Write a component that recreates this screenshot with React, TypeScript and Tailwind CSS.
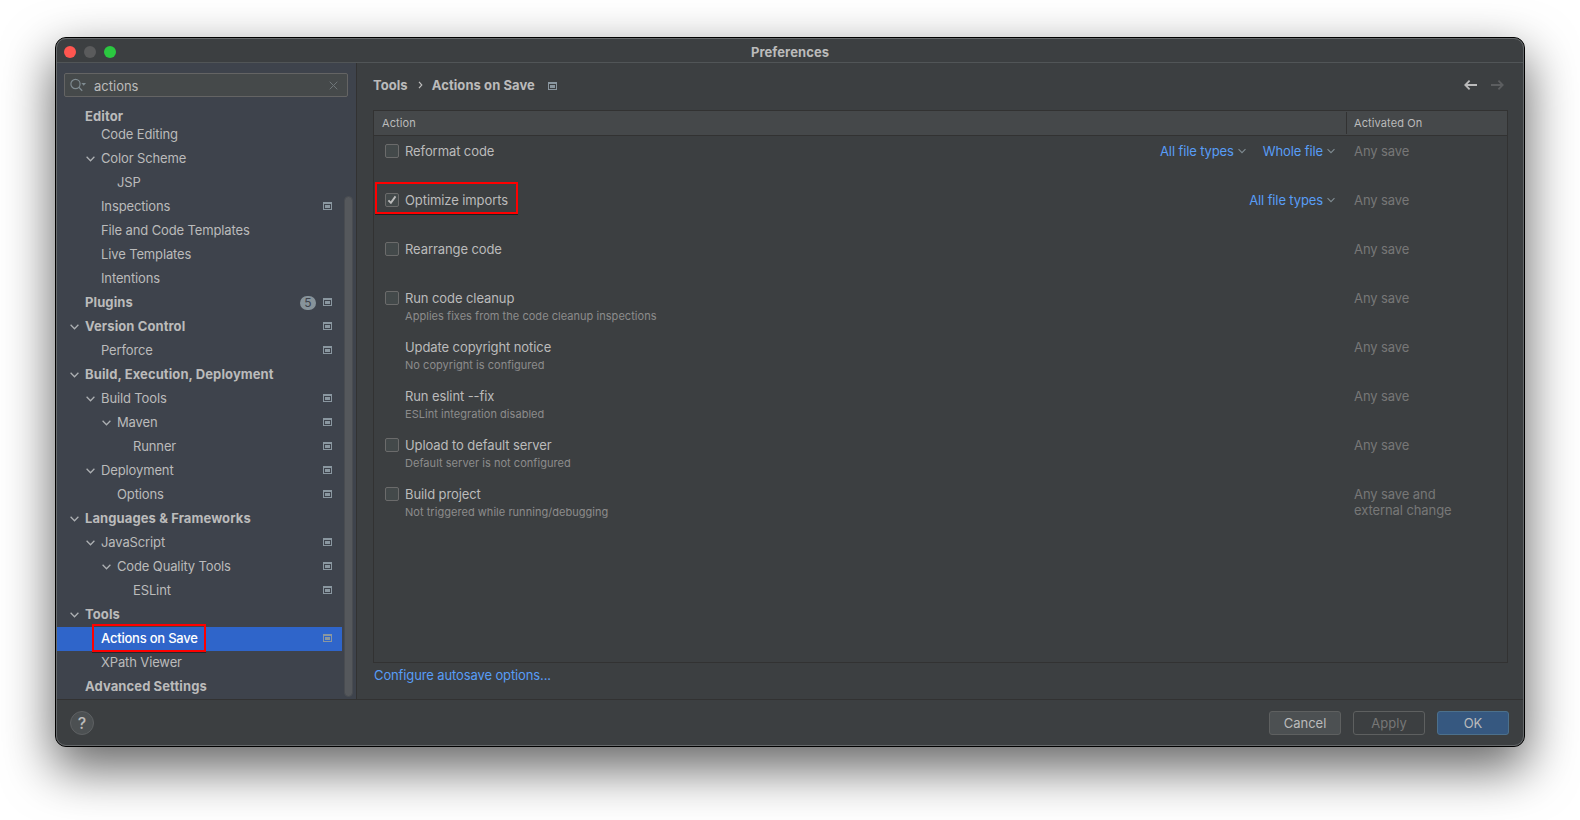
import React from "react";

type TreeItem = {
  label: string;
  level: number;
  bold?: boolean;
  open?: boolean;
  mark?: boolean;
  count?: number;
  selected?: boolean;
};

const tree: TreeItem[] = [
  { label: "Code Editing", level: 1 },
  { label: "Color Scheme", level: 1, open: true },
  { label: "JSP", level: 2 },
  { label: "Inspections", level: 1, mark: true },
  { label: "File and Code Templates", level: 1 },
  { label: "Live Templates", level: 1 },
  { label: "Intentions", level: 1 },
  { label: "Plugins", level: 0, bold: true, mark: true, count: 5 },
  { label: "Version Control", level: 0, bold: true, open: true, mark: true },
  { label: "Perforce", level: 1, mark: true },
  { label: "Build, Execution, Deployment", level: 0, bold: true, open: true },
  { label: "Build Tools", level: 1, open: true, mark: true },
  { label: "Maven", level: 2, open: true, mark: true },
  { label: "Runner", level: 3, mark: true },
  { label: "Deployment", level: 1, open: true, mark: true },
  { label: "Options", level: 2, mark: true },
  { label: "Languages & Frameworks", level: 0, bold: true, open: true },
  { label: "JavaScript", level: 1, open: true, mark: true },
  { label: "Code Quality Tools", level: 2, open: true, mark: true },
  { label: "ESLint", level: 3, mark: true },
  { label: "Tools", level: 0, bold: true, open: true },
  { label: "Actions on Save", level: 1, mark: true, selected: true },
  { label: "XPath Viewer", level: 1 },
  { label: "Advanced Settings", level: 0, bold: true },
];

const indents = ["pl-[11px]", "pl-[27px]", "pl-[43px]", "pl-[59px]"];

type Action = {
  label: string;
  note?: string;
  check?: "on" | "off";
  links?: string[];
  when?: string;
};

const actions: Action[] = [
  { label: "Reformat code", check: "off", links: ["All file types", "Whole file"] },
  { label: "Optimize imports", check: "on", links: ["All file types"] },
  { label: "Rearrange code", check: "off" },
  { label: "Run code cleanup", check: "off", note: "Applies fixes from the code cleanup inspections" },
  { label: "Update copyright notice", note: "No copyright is configured" },
  { label: "Run eslint --fix", note: "ESLint integration disabled" },
  { label: "Upload to default server", check: "off", note: "Default server is not configured" },
  { label: "Build project", check: "off", note: "Not triggered while running/debugging", when: "Any save and external change" },
];

function Chevron({ className }: { className: string }) {
  return (
    <svg width="9" height="6" viewBox="0 0 9 6" fill="none" stroke="currentColor" className={className}>
      <path d="M0.6 0.8 L4.5 4.8 L8.4 0.8" strokeWidth="1.25" />
    </svg>
  );
}

function ProjectMark({ className }: { className: string }) {
  return (
    <svg width="9" height="8" viewBox="0 0 9 8" fill="currentColor" className={className}>
      <path d="M0 0h9v8H0z M1 2v5h7V2z" fillRule="evenodd" />
      <path d="M2 3h5v3H2z" />
    </svg>
  );
}

function TreeRow({ item }: { item: TreeItem }) {
  const weight = item.bold ? "font-bold tracking-[0.1px]" : item.selected ? "font-medium tracking-[-0.22px]" : "tracking-[-0.13px]";
  return (
    <div
      className={`flex h-[24px] w-[285px] shrink-0 items-center ${indents[item.level]} ${
        item.selected ? "bg-[#2f65ca] text-white" : "text-[#bbbbbb]"
      }`}
    >
      <span className="flex w-[17px] shrink-0 items-center">
        {item.open && <Chevron className="-mt-px ml-[2px] text-[#adb0b3]" />}
      </span>
      <span className={`relative pb-[2px] whitespace-nowrap ${weight}`}>
        {item.label}
        {item.selected && (
          <span className="absolute -top-[6px] -left-[9px] h-[28px] w-[114px] border-2 border-[#ff0000] shadow-[0_1px_0_rgba(0,0,0,0.4)]" />
        )}
      </span>
      <span className="ml-auto flex items-center gap-[7px] pr-[10px]">
        {item.count !== undefined && (
          <span className="flex h-[14px] w-[16px] items-center justify-center rounded-full bg-[#87939a] text-[12px] text-[#3e434c]">
            {item.count}
          </span>
        )}
        {item.mark && <ProjectMark className="-mt-[2px] text-[#8a97a0]" />}
      </span>
    </div>
  );
}

function Checkbox({ on }: { on: boolean }) {
  return (
    <span className="flex size-[14px] items-center justify-center rounded-[2px] border border-[#6b6b6b] bg-[#43494a]">
      {on && (
        <svg width="12" height="12" viewBox="0 0 12 12" fill="none" stroke="#bbbbbb" className="shrink-0">
          <path d="M2.4 6.4 L4.9 8.9 L9.5 2.4" strokeWidth="1.9" />
        </svg>
      )}
    </span>
  );
}

function ActionRow({ action }: { action: Action }) {
  return (
    <div className="flex h-[49px] tracking-[-0.09px]">
      <div className="flex w-[973px] pl-[11px]">
        <div className="w-[20px] pt-[8px]">{action.check && <Checkbox on={action.check === "on"} />}</div>
        <div className="pt-[7px]">
          <div className="relative h-[16px] leading-[17px] whitespace-nowrap">
            {action.label}
            {action.check === "on" && (
              <span className="absolute -top-[10px] -left-[30px] h-[32px] w-[143px] border-2 border-[#ff0000] shadow-[0_1px_0_rgba(0,0,0,0.5)]" />
            )}
          </div>
          {action.note && (
            <div className="pt-[2px] text-[11px] leading-[16px] tracking-[0.04px] text-[#8c8c8c]">{action.note}</div>
          )}
        </div>
        <div className="ml-auto flex gap-[17px] pt-[7px] pr-[12px] leading-[17px] text-[#589df6]">
          {action.links?.map((l) => (
            <span key={l} className="flex h-[16px] items-center gap-[4px] tracking-[-0.12px]">
              {l}
              <Chevron className="w-[8px] text-[#7f8b91]" />
            </span>
          ))}
        </div>
      </div>
      <div className="w-[120px] pt-[7px] pl-[7px] leading-[16px] text-[#777777]">{action.when ?? "Any save"}</div>
    </div>
  );
}

export default function App() {
  return (
    <div className="h-[820px] w-[1580px] overflow-hidden bg-white pt-[37px] pl-[55px] font-['Inter',sans-serif] text-[13px] leading-[16px] text-[#bbbbbb]">
      <div className="h-[710px] w-[1470px] rounded-[11px] border border-black bg-[#3c3f41] shadow-[0_20px_50px_2px_rgba(0,0,0,0.6)]">
        <div className="flex h-[708px] w-[1468px] flex-col overflow-hidden rounded-[10px] border border-[#66696b]">
          <header className="relative flex h-[24px] shrink-0 items-center justify-center border-b border-[#515557]">
            <div className="absolute top-[7px] left-[7px] flex gap-[8px]">
              <span className="size-[12px] rounded-full bg-[#ff5650]" />
              <span className="size-[12px] rounded-full bg-[#5a5b5c]" />
              <span className="size-[12px] rounded-full bg-[#2bc840]" />
            </div>
            <h1 className="pt-[2px] font-bold tracking-[0.08px]">Preferences</h1>
          </header>

          <div className="flex h-[636px] shrink-0">
            <aside className="flex w-[300px] shrink-0 flex-col border-r border-[#323232] bg-[#3e434c]">
              <div className="mt-[10px] ml-[7px] flex h-[24px] w-[284px] shrink-0 items-center rounded-[2px] border border-[#646464] bg-[#45494a] pl-[5px]">
                <svg width="17" height="14" viewBox="0 0 17 14" fill="none" stroke="#7f8b91" className="shrink-0">
                  <circle cx="5.5" cy="6" r="4.6" strokeWidth="1.2" />
                  <path d="M8.8 9.3 L12.2 12.7" strokeWidth="1.3" />
                  <path d="M11.4 5 H16 L13.7 7.8z" fill="#7f8b91" stroke="none" />
                </svg>
                <span className="pt-px pl-[7px]">actions</span>
                <svg width="9" height="9" viewBox="0 0 9 9" stroke="#6f7679" className="mr-[9px] ml-auto">
                  <path d="M0.7 0.7 L8.3 8.3 M8.3 0.7 L0.7 8.3" strokeWidth="1" />
                </svg>
              </div>
              <div className="flex">
                <div className="flex w-[285px] shrink-0 flex-col pt-[8px]">
                  <div className="flex h-[18px] shrink-0 items-start pt-[3px] pl-[28px] font-bold tracking-[0.1px]">Editor</div>
                  {tree.map((t) => (
                    <TreeRow key={t.label} item={t} />
                  ))}
                </div>
                <div className="mt-[99px] ml-[2px] h-[501px] w-[9px] rounded-full border border-[#494c51] bg-[#55585c]" />
              </div>
            </aside>

            <main className="flex grow flex-col pl-[16px]">
              <div className="flex h-[47px] shrink-0 items-center pr-[19px] pb-[3px] font-bold">
                <span className="tracking-[0.05px]">Tools</span>
                <svg width="5" height="8" viewBox="0 0 5 8" fill="none" stroke="#bbbbbb" className="mr-[9px] ml-[10px]">
                  <path d="M1 0.8 L3.8 4 L1 7.2" strokeWidth="1.2" />
                </svg>
                <span className="tracking-[0.08px]">Actions on Save</span>
                <ProjectMark className="mt-px ml-[13px] text-[#8a97a0]" />
                <span className="ml-auto flex gap-[14px]">
                  <svg width="13" height="10" viewBox="0 0 13 10" fill="none" stroke="#bbbbbb">
                    <path d="M13 5 H1.5 M5.6 0.7 L1.3 5 L5.6 9.3" strokeWidth="1.8" />
                  </svg>
                  <svg width="13" height="10" viewBox="0 0 13 10" fill="none" stroke="#5c5e60">
                    <path d="M0 5 H11.5 M7.4 0.7 L11.7 5 L7.4 9.3" strokeWidth="1.8" />
                  </svg>
                </span>
              </div>
              <section className="h-[553px] w-[1135px] shrink-0 border border-[#323232]">
                <div className="flex h-[25px] items-stretch border-b border-[#323232] bg-[#45484a] text-[11px] leading-[24px] tracking-[0.1px]">
                  <span className="w-[972px] pl-[8px]">Action</span>
                  <span className="my-px border-l border-[#323232] pl-[7px] leading-[22px]">Activated On</span>
                </div>
                {actions.map((a) => (
                  <ActionRow key={a.label} action={a} />
                ))}
              </section>
              <a className="pt-[4px] pl-px tracking-[-0.12px] text-[#589df6]">Configure autosave options...</a>
            </main>
          </div>

          <footer className="flex grow items-center border-t border-[#323232] pr-[14px] pl-[13px]">
            <span className="flex size-[24px] items-center justify-center rounded-full border border-[#5e6163] bg-[#4c5052] text-[16px] font-medium">
              ?
            </span>
            <div className="ml-auto flex gap-[12px]">
              <button className="h-[24px] w-[72px] rounded-[3px] border border-[#5e6060] bg-[#4c5052] pt-px">Cancel</button>
              <button className="h-[24px] w-[72px] rounded-[3px] border border-[#5e6060] pt-px text-[#777777]">Apply</button>
              <button className="h-[24px] w-[72px] rounded-[3px] border border-[#4c708c] bg-[#365880] pt-px">OK</button>
            </div>
          </footer>
        </div>
      </div>
    </div>
  );
}
